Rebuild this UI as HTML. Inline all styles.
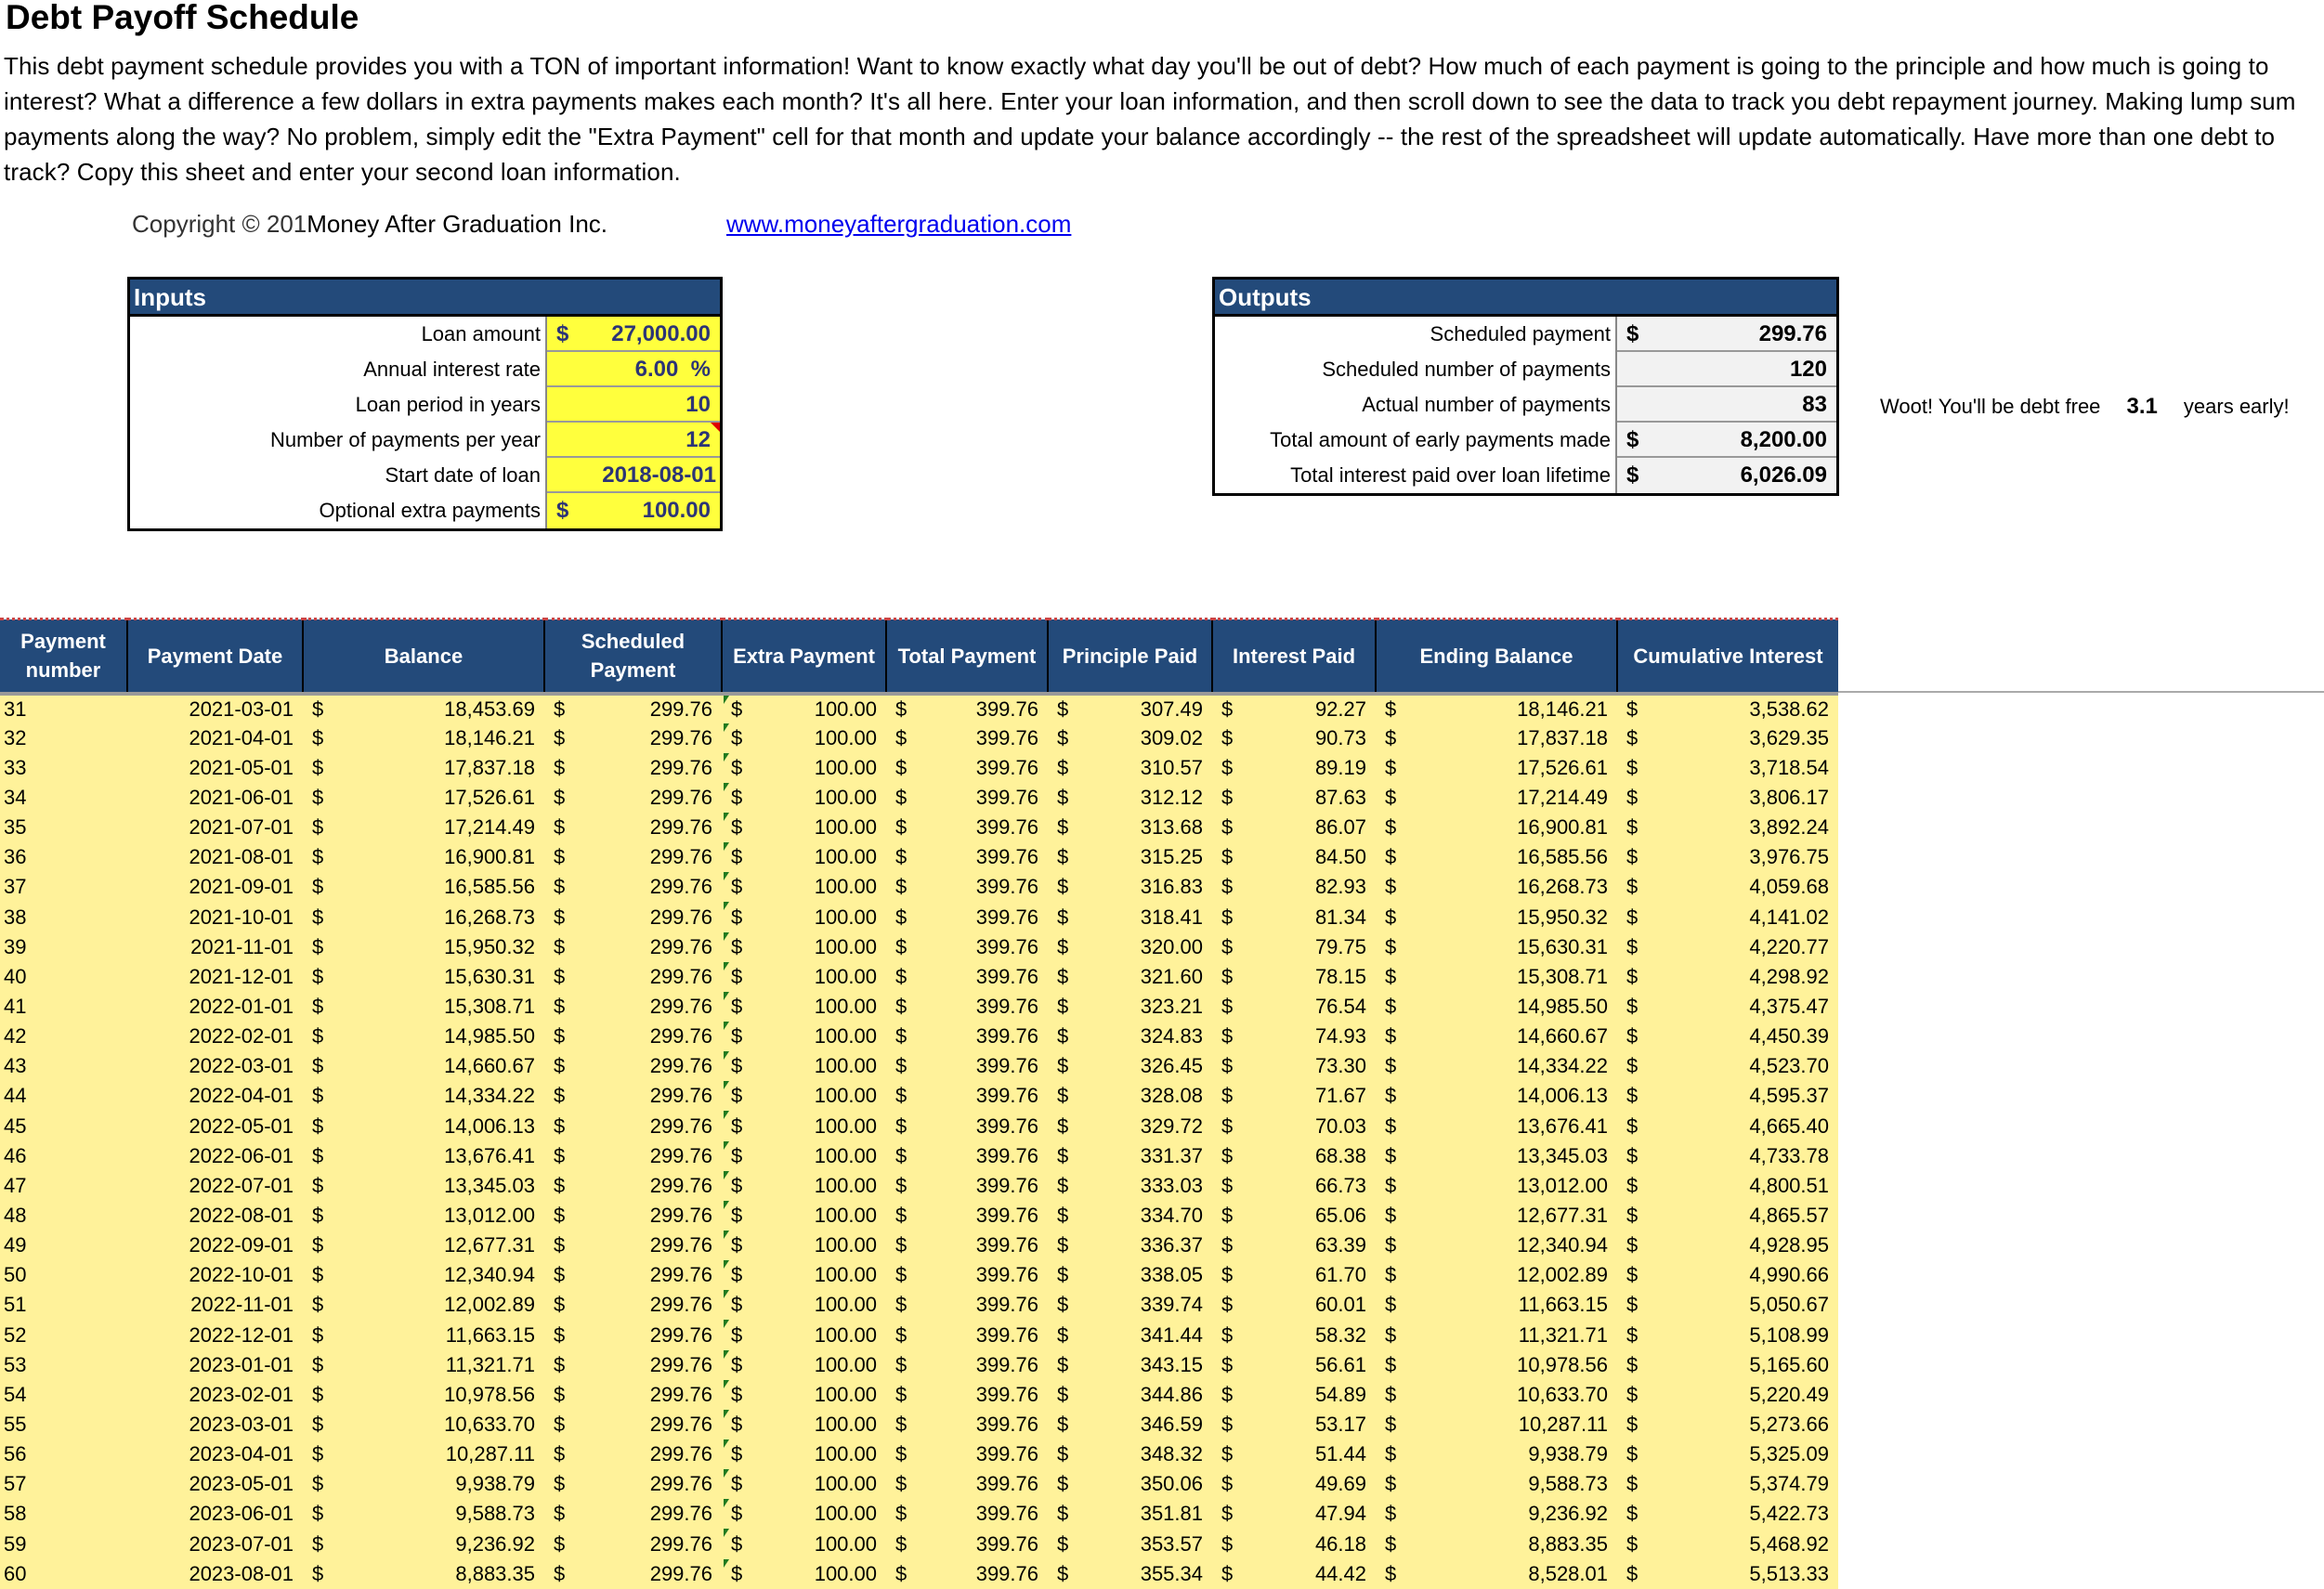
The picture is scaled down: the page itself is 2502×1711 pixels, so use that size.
<!DOCTYPE html>
<html><head><meta charset="utf-8"><style>
*{margin:0;padding:0;box-sizing:border-box}
body{width:2502px;height:1710px;overflow:hidden;background:#fff;position:relative;font-family:"Liberation Sans Narrow","Liberation Sans",sans-serif;color:#000}
.p{position:absolute;font-family:"Liberation Sans",sans-serif}
h1{position:absolute;left:6px;top:-2px;font-size:37px;font-weight:bold;font-family:"Liberation Sans",sans-serif}
.para{left:4px;top:52px;width:2480px;font-size:26px;letter-spacing:0.1px;line-height:38px}
.box{position:absolute;border:3px solid #000;background:#fff}
.box .hd{height:40px;background:#234a7a;color:#fff;font-weight:bold;font-size:26px;padding:4px 0 0 4px;border-bottom:3px solid #000}
.box .r{display:flex;height:38px;font-size:22px;line-height:38px}
.box .l{text-align:right;padding-right:5px;border-right:2px solid #888}
.box .v{position:relative;text-align:right;padding-right:10px;font-weight:bold;border-bottom:2px solid #999;font-size:24px}
.box .v i{position:absolute;left:10px;font-style:normal}
.inp .v{background:#ffff3d;color:#2c3476}
.out .v{background:#f2f2f2}
table{position:absolute;left:0;top:665px;border-collapse:collapse;table-layout:fixed;width:1979px}
th{background:#234a7a;color:#fff;font-size:22px;height:80px;font-weight:bold;line-height:31px;border-left:2px solid #000;border-top:3px dotted #c44;border-bottom:4px solid #999}
th:first-child{border-left:none}
td{background:#fff29a;height:32.15px;font-size:22px;text-align:right;padding-right:10px;white-space:nowrap;position:relative}
td i{font-style:normal;float:left;padding-left:10px}
td:first-child{text-align:left;padding-left:4px}
td.e::before{content:"";position:absolute;left:2px;top:0;border-top:9px solid #1f7a1f;border-right:6px solid transparent}
</style></head><body>
<h1>Debt Payoff Schedule</h1>
<div class="p para">This debt payment schedule provides you with a TON of important information! Want to know exactly what day you'll be out of debt? How much of each payment is going to the principle and how much is going to interest? What a difference a few dollars in extra payments makes each month? It's all here. Enter your loan information, and then scroll down to see the data to track you debt repayment journey. Making lump sum payments along the way? No problem, simply edit the "Extra Payment" cell for that month and update your balance accordingly -- the rest of the spreadsheet will update automatically. Have more than one debt to track? Copy this sheet and enter your second loan information.</div>
<div class="p" style="left:142px;top:226px;font-size:26px;color:#333">Copyright © 201<span style="color:#000">Money After Graduation Inc.</span></div>
<div class="p" style="left:782px;top:226px;font-size:26px;color:#0000ee;text-decoration:underline">www.moneyaftergraduation.com</div>

<div class="box inp" style="left:137px;top:298px;width:641px">
<div class="hd">Inputs</div>
<div class="r"><div class="l" style="width:449px">Loan amount</div><div class="v" style="width:186px"><i>$</i>27,000.00</div></div>
<div class="r"><div class="l" style="width:449px">Annual interest rate</div><div class="v" style="width:186px">6.00 &nbsp;%</div></div>
<div class="r"><div class="l" style="width:449px">Loan period in years</div><div class="v" style="width:186px">10</div></div>
<div class="r"><div class="l" style="width:449px">Number of payments per year</div><div class="v" style="width:186px">12<span style="position:absolute;right:0;top:0;border-top:10px solid #d00;border-left:10px solid transparent"></span></div></div>
<div class="r"><div class="l" style="width:449px">Start date of loan</div><div class="v" style="width:186px;padding-right:4px">2018-08-01</div></div>
<div class="r"><div class="l" style="width:449px">Optional extra payments</div><div class="v" style="width:186px;border-bottom:none"><i>$</i>100.00</div></div>
</div>

<div class="box out" style="left:1305px;top:298px;width:675px">
<div class="hd">Outputs</div>
<div class="r"><div class="l" style="width:433px">Scheduled payment</div><div class="v" style="width:236px"><i>$</i>299.76</div></div>
<div class="r"><div class="l" style="width:433px">Scheduled number of payments</div><div class="v" style="width:236px">120</div></div>
<div class="r"><div class="l" style="width:433px">Actual number of payments</div><div class="v" style="width:236px">83</div></div>
<div class="r"><div class="l" style="width:433px">Total amount of early payments made</div><div class="v" style="width:236px"><i>$</i>8,200.00</div></div>
<div class="r"><div class="l" style="width:433px">Total interest paid over loan lifetime</div><div class="v" style="width:236px;border-bottom:none"><i>$</i>6,026.09</div></div>
</div>
<div style="position:absolute;left:2024px;top:424px;font-size:22px">Woot! You'll be debt free <b style="margin:0 28px 0 22px;font-size:24px">3.1</b>years early!</div>
<div style="position:absolute;left:1979px;top:744px;width:523px;height:2px;background:#aaa"></div>

<table>
<colgroup><col style="width:137px"><col style="width:189px"><col style="width:260px"><col style="width:191px"><col style="width:177px"><col style="width:174px"><col style="width:177px"><col style="width:176px"><col style="width:260px"><col style="width:238px"></colgroup>
<tr><th>Payment<br>number</th><th>Payment Date</th><th>Balance</th><th>Scheduled<br>Payment</th><th>Extra Payment</th><th>Total Payment</th><th>Principle Paid</th><th>Interest Paid</th><th>Ending Balance</th><th>Cumulative Interest</th></tr>
<tr><td>31</td><td>2021-03-01</td><td><i>$</i>18,453.69</td><td><i>$</i>299.76</td><td class="e"><i>$</i>100.00</td><td><i>$</i>399.76</td><td><i>$</i>307.49</td><td><i>$</i>92.27</td><td><i>$</i>18,146.21</td><td><i>$</i>3,538.62</td></tr>
<tr><td>32</td><td>2021-04-01</td><td><i>$</i>18,146.21</td><td><i>$</i>299.76</td><td class="e"><i>$</i>100.00</td><td><i>$</i>399.76</td><td><i>$</i>309.02</td><td><i>$</i>90.73</td><td><i>$</i>17,837.18</td><td><i>$</i>3,629.35</td></tr>
<tr><td>33</td><td>2021-05-01</td><td><i>$</i>17,837.18</td><td><i>$</i>299.76</td><td class="e"><i>$</i>100.00</td><td><i>$</i>399.76</td><td><i>$</i>310.57</td><td><i>$</i>89.19</td><td><i>$</i>17,526.61</td><td><i>$</i>3,718.54</td></tr>
<tr><td>34</td><td>2021-06-01</td><td><i>$</i>17,526.61</td><td><i>$</i>299.76</td><td class="e"><i>$</i>100.00</td><td><i>$</i>399.76</td><td><i>$</i>312.12</td><td><i>$</i>87.63</td><td><i>$</i>17,214.49</td><td><i>$</i>3,806.17</td></tr>
<tr><td>35</td><td>2021-07-01</td><td><i>$</i>17,214.49</td><td><i>$</i>299.76</td><td class="e"><i>$</i>100.00</td><td><i>$</i>399.76</td><td><i>$</i>313.68</td><td><i>$</i>86.07</td><td><i>$</i>16,900.81</td><td><i>$</i>3,892.24</td></tr>
<tr><td>36</td><td>2021-08-01</td><td><i>$</i>16,900.81</td><td><i>$</i>299.76</td><td class="e"><i>$</i>100.00</td><td><i>$</i>399.76</td><td><i>$</i>315.25</td><td><i>$</i>84.50</td><td><i>$</i>16,585.56</td><td><i>$</i>3,976.75</td></tr>
<tr><td>37</td><td>2021-09-01</td><td><i>$</i>16,585.56</td><td><i>$</i>299.76</td><td class="e"><i>$</i>100.00</td><td><i>$</i>399.76</td><td><i>$</i>316.83</td><td><i>$</i>82.93</td><td><i>$</i>16,268.73</td><td><i>$</i>4,059.68</td></tr>
<tr><td>38</td><td>2021-10-01</td><td><i>$</i>16,268.73</td><td><i>$</i>299.76</td><td class="e"><i>$</i>100.00</td><td><i>$</i>399.76</td><td><i>$</i>318.41</td><td><i>$</i>81.34</td><td><i>$</i>15,950.32</td><td><i>$</i>4,141.02</td></tr>
<tr><td>39</td><td>2021-11-01</td><td><i>$</i>15,950.32</td><td><i>$</i>299.76</td><td class="e"><i>$</i>100.00</td><td><i>$</i>399.76</td><td><i>$</i>320.00</td><td><i>$</i>79.75</td><td><i>$</i>15,630.31</td><td><i>$</i>4,220.77</td></tr>
<tr><td>40</td><td>2021-12-01</td><td><i>$</i>15,630.31</td><td><i>$</i>299.76</td><td class="e"><i>$</i>100.00</td><td><i>$</i>399.76</td><td><i>$</i>321.60</td><td><i>$</i>78.15</td><td><i>$</i>15,308.71</td><td><i>$</i>4,298.92</td></tr>
<tr><td>41</td><td>2022-01-01</td><td><i>$</i>15,308.71</td><td><i>$</i>299.76</td><td class="e"><i>$</i>100.00</td><td><i>$</i>399.76</td><td><i>$</i>323.21</td><td><i>$</i>76.54</td><td><i>$</i>14,985.50</td><td><i>$</i>4,375.47</td></tr>
<tr><td>42</td><td>2022-02-01</td><td><i>$</i>14,985.50</td><td><i>$</i>299.76</td><td class="e"><i>$</i>100.00</td><td><i>$</i>399.76</td><td><i>$</i>324.83</td><td><i>$</i>74.93</td><td><i>$</i>14,660.67</td><td><i>$</i>4,450.39</td></tr>
<tr><td>43</td><td>2022-03-01</td><td><i>$</i>14,660.67</td><td><i>$</i>299.76</td><td class="e"><i>$</i>100.00</td><td><i>$</i>399.76</td><td><i>$</i>326.45</td><td><i>$</i>73.30</td><td><i>$</i>14,334.22</td><td><i>$</i>4,523.70</td></tr>
<tr><td>44</td><td>2022-04-01</td><td><i>$</i>14,334.22</td><td><i>$</i>299.76</td><td class="e"><i>$</i>100.00</td><td><i>$</i>399.76</td><td><i>$</i>328.08</td><td><i>$</i>71.67</td><td><i>$</i>14,006.13</td><td><i>$</i>4,595.37</td></tr>
<tr><td>45</td><td>2022-05-01</td><td><i>$</i>14,006.13</td><td><i>$</i>299.76</td><td class="e"><i>$</i>100.00</td><td><i>$</i>399.76</td><td><i>$</i>329.72</td><td><i>$</i>70.03</td><td><i>$</i>13,676.41</td><td><i>$</i>4,665.40</td></tr>
<tr><td>46</td><td>2022-06-01</td><td><i>$</i>13,676.41</td><td><i>$</i>299.76</td><td class="e"><i>$</i>100.00</td><td><i>$</i>399.76</td><td><i>$</i>331.37</td><td><i>$</i>68.38</td><td><i>$</i>13,345.03</td><td><i>$</i>4,733.78</td></tr>
<tr><td>47</td><td>2022-07-01</td><td><i>$</i>13,345.03</td><td><i>$</i>299.76</td><td class="e"><i>$</i>100.00</td><td><i>$</i>399.76</td><td><i>$</i>333.03</td><td><i>$</i>66.73</td><td><i>$</i>13,012.00</td><td><i>$</i>4,800.51</td></tr>
<tr><td>48</td><td>2022-08-01</td><td><i>$</i>13,012.00</td><td><i>$</i>299.76</td><td class="e"><i>$</i>100.00</td><td><i>$</i>399.76</td><td><i>$</i>334.70</td><td><i>$</i>65.06</td><td><i>$</i>12,677.31</td><td><i>$</i>4,865.57</td></tr>
<tr><td>49</td><td>2022-09-01</td><td><i>$</i>12,677.31</td><td><i>$</i>299.76</td><td class="e"><i>$</i>100.00</td><td><i>$</i>399.76</td><td><i>$</i>336.37</td><td><i>$</i>63.39</td><td><i>$</i>12,340.94</td><td><i>$</i>4,928.95</td></tr>
<tr><td>50</td><td>2022-10-01</td><td><i>$</i>12,340.94</td><td><i>$</i>299.76</td><td class="e"><i>$</i>100.00</td><td><i>$</i>399.76</td><td><i>$</i>338.05</td><td><i>$</i>61.70</td><td><i>$</i>12,002.89</td><td><i>$</i>4,990.66</td></tr>
<tr><td>51</td><td>2022-11-01</td><td><i>$</i>12,002.89</td><td><i>$</i>299.76</td><td class="e"><i>$</i>100.00</td><td><i>$</i>399.76</td><td><i>$</i>339.74</td><td><i>$</i>60.01</td><td><i>$</i>11,663.15</td><td><i>$</i>5,050.67</td></tr>
<tr><td>52</td><td>2022-12-01</td><td><i>$</i>11,663.15</td><td><i>$</i>299.76</td><td class="e"><i>$</i>100.00</td><td><i>$</i>399.76</td><td><i>$</i>341.44</td><td><i>$</i>58.32</td><td><i>$</i>11,321.71</td><td><i>$</i>5,108.99</td></tr>
<tr><td>53</td><td>2023-01-01</td><td><i>$</i>11,321.71</td><td><i>$</i>299.76</td><td class="e"><i>$</i>100.00</td><td><i>$</i>399.76</td><td><i>$</i>343.15</td><td><i>$</i>56.61</td><td><i>$</i>10,978.56</td><td><i>$</i>5,165.60</td></tr>
<tr><td>54</td><td>2023-02-01</td><td><i>$</i>10,978.56</td><td><i>$</i>299.76</td><td class="e"><i>$</i>100.00</td><td><i>$</i>399.76</td><td><i>$</i>344.86</td><td><i>$</i>54.89</td><td><i>$</i>10,633.70</td><td><i>$</i>5,220.49</td></tr>
<tr><td>55</td><td>2023-03-01</td><td><i>$</i>10,633.70</td><td><i>$</i>299.76</td><td class="e"><i>$</i>100.00</td><td><i>$</i>399.76</td><td><i>$</i>346.59</td><td><i>$</i>53.17</td><td><i>$</i>10,287.11</td><td><i>$</i>5,273.66</td></tr>
<tr><td>56</td><td>2023-04-01</td><td><i>$</i>10,287.11</td><td><i>$</i>299.76</td><td class="e"><i>$</i>100.00</td><td><i>$</i>399.76</td><td><i>$</i>348.32</td><td><i>$</i>51.44</td><td><i>$</i>9,938.79</td><td><i>$</i>5,325.09</td></tr>
<tr><td>57</td><td>2023-05-01</td><td><i>$</i>9,938.79</td><td><i>$</i>299.76</td><td class="e"><i>$</i>100.00</td><td><i>$</i>399.76</td><td><i>$</i>350.06</td><td><i>$</i>49.69</td><td><i>$</i>9,588.73</td><td><i>$</i>5,374.79</td></tr>
<tr><td>58</td><td>2023-06-01</td><td><i>$</i>9,588.73</td><td><i>$</i>299.76</td><td class="e"><i>$</i>100.00</td><td><i>$</i>399.76</td><td><i>$</i>351.81</td><td><i>$</i>47.94</td><td><i>$</i>9,236.92</td><td><i>$</i>5,422.73</td></tr>
<tr><td>59</td><td>2023-07-01</td><td><i>$</i>9,236.92</td><td><i>$</i>299.76</td><td class="e"><i>$</i>100.00</td><td><i>$</i>399.76</td><td><i>$</i>353.57</td><td><i>$</i>46.18</td><td><i>$</i>8,883.35</td><td><i>$</i>5,468.92</td></tr>
<tr><td>60</td><td>2023-08-01</td><td><i>$</i>8,883.35</td><td><i>$</i>299.76</td><td class="e"><i>$</i>100.00</td><td><i>$</i>399.76</td><td><i>$</i>355.34</td><td><i>$</i>44.42</td><td><i>$</i>8,528.01</td><td><i>$</i>5,513.33</td></tr>
</table>
</body></html>
